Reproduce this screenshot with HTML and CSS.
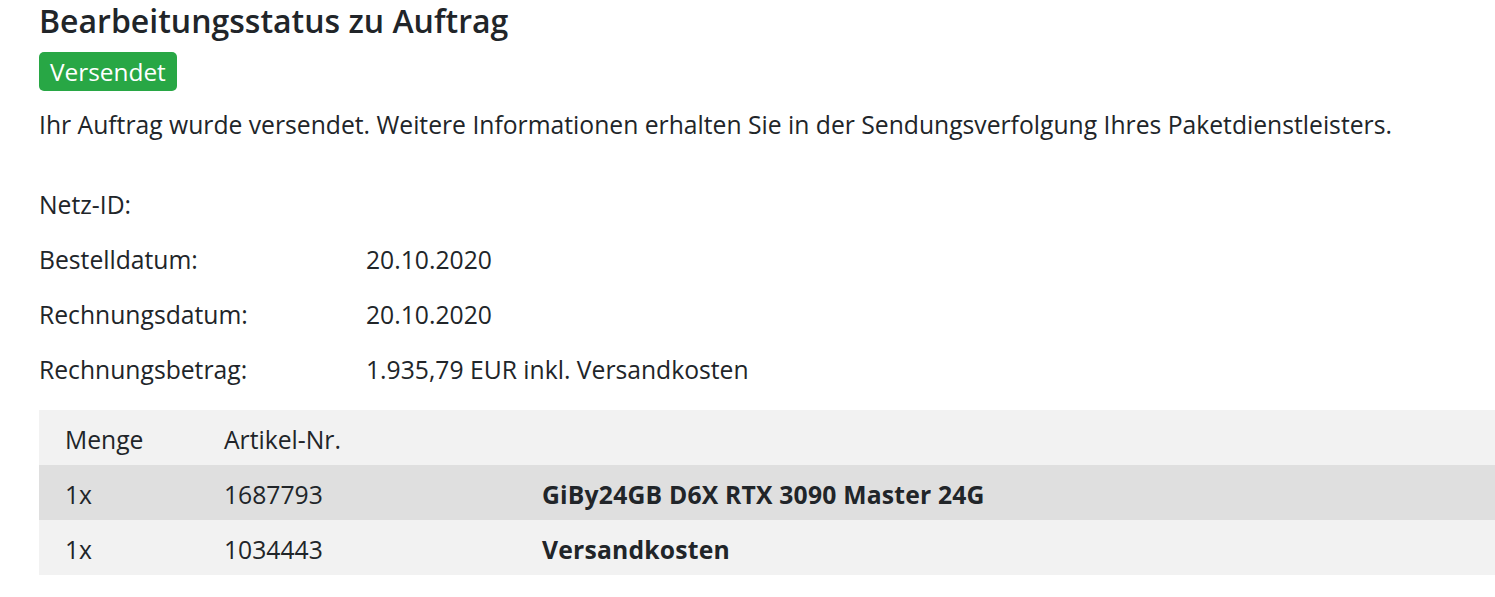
FILE: index.html
```html
<!DOCTYPE html>
<html lang="de">

    <head>
        <meta charset="UTF-8">
        <meta name="viewport" content="width=device-width, initial-scale=1.0">
        <title>Bearbeitungsstatus</title>
        <link rel="stylesheet" href="styles.css">
    </head>

    <body>
        <div class="page">
            <h2 class="title">Bearbeitungsstatus zu Auftrag</h2>
            <span class="badge">Versendet</span>
            <p class="info">Ihr Auftrag wurde versendet. Weitere Informationen erhalten Sie in der Sendungsverfolgung Ihres Paketdienstleisters.</p>

            <div class="details">
                <div class="row">
                    <div class="label">Netz-ID:</div>
                    <div class="value"></div>
                </div>
                <div class="row">
                    <div class="label">Bestelldatum:</div>
                    <div class="value">20.10.2020</div>
                </div>
                <div class="row">
                    <div class="label">Rechnungsdatum:</div>
                    <div class="value">20.10.2020</div>
                </div>
                <div class="row">
                    <div class="label">Rechnungsbetrag:</div>
                    <div class="value">1.935,79 EUR inkl. Versandkosten</div>
                </div>
            </div>

            <table class="items">
                <thead>
                    <tr>
                        <th class="col-qty">Menge</th>
                        <th class="col-nr">Artikel-Nr.</th>
                        <th></th>
                    </tr>
                </thead>
                <tbody>
                    <tr>
                        <td>1x</td>
                        <td>1687793</td>
                        <td class="name">GiBy24GB D6X RTX 3090 Master 24G</td>
                    </tr>
                    <tr>
                        <td>1x</td>
                        <td>1034443</td>
                        <td class="name">Versandkosten</td>
                    </tr>
                </tbody>
            </table>
        </div>
    </body>

</html>
```

FILE: styles.css
```css
body {
    font-family: "Open Sans", Arial, sans-serif;
    margin: 0;
    padding: 0;
    background-color: #fff;
    color: #212529;
}

.page {
    padding: 1px 0 0 39px;
    font-size: 24.7px;
}

.title {
    font-size: 32px;
    font-weight: 600;
    line-height: 40px;
    margin: 0 0 11px 0;
}

.badge {
    display: block;
    width: fit-content;
    background-color: #28a745;
    color: #fff;
    font-size: 24.4px;
    line-height: 38px;
    padding: 1px 11px 0 11px;
    border-radius: 5px;
}

.info {
    line-height: 36px;
    margin: 16px 0 32px 0;
}

.row {
    display: flex;
    line-height: 51px;
    padding-top: 4px;
}

.label {
    width: 327px;
}

.items {
    width: 100%;
    border-collapse: collapse;
    margin-top: 15px;
}

.items th,
.items td {
    line-height: 51px;
    padding: 4px 0 0 26px;
    text-align: left;
    font-weight: normal;
}

.items thead tr,
.items tbody tr:nth-child(even) {
    background-color: #f2f2f2;
}

.items tbody tr:nth-child(odd) {
    background-color: #dfdfdf;
}

.col-qty {
    width: 133px;
}

.col-nr {
    width: 292px;
}

.items .name {
    font-weight: bold;
    letter-spacing: 0.2px;
}
```
